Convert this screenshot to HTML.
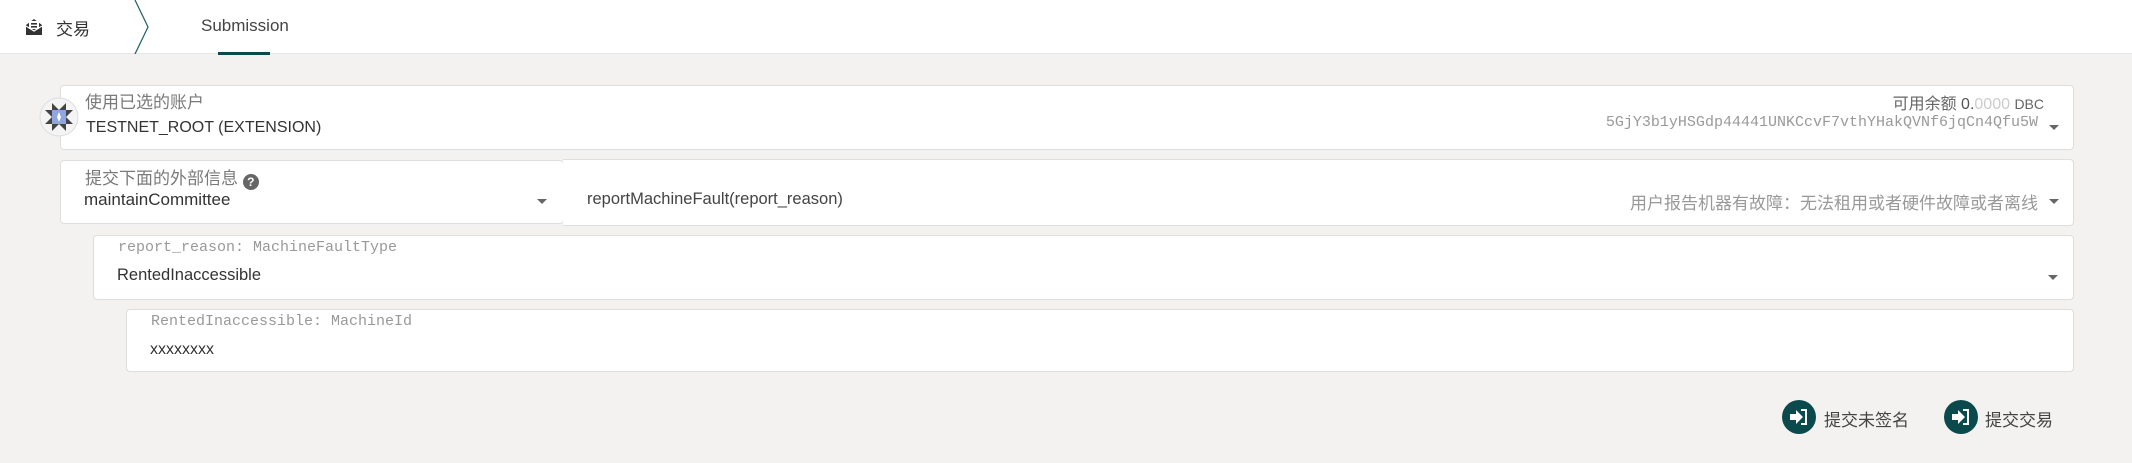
<!DOCTYPE html>
<html><head><meta charset="utf-8"><style>
*{margin:0;padding:0;box-sizing:border-box}
body{width:2132px;height:463px;background:#f3f2f0;font-family:"Liberation Sans","Noto Sans CJK SC",sans-serif;position:relative;overflow:hidden;color:#333}
.a{position:absolute;white-space:nowrap}
.box{position:absolute;background:#fff;border:1px solid #dedede;border-radius:4px}
.lbl{color:#7a7a7a;font-size:17px}
.mono{font-family:"Liberation Mono",monospace;color:#999;font-size:15px}
.val{font-size:17px;color:#333}
.arr{position:absolute;width:0;height:0;border-left:5px solid transparent;border-right:5px solid transparent;border-top:5px solid #666}
.btn{position:absolute;width:34px;height:34px;border-radius:50%;background:#0b4a4c}
</style></head><body>
<div class="a" style="left:0;top:0;width:2132px;height:54px;background:#fff;border-bottom:1px solid #e6e6e6"></div>
<svg class="a" style="left:24px;top:18px" width="20" height="18" viewBox="0 0 20 18"><path d="M2 7 L10 1 L18 7 V17 H2Z" fill="#333"/><rect x="5" y="3" width="10" height="8" fill="#fff"/><rect x="7" y="5" width="6" height="1.6" fill="#333"/><rect x="7" y="8" width="6" height="1.6" fill="#333"/><path d="M2 8 L10 13 L18 8" stroke="#fff" stroke-width="1.2" fill="none"/></svg>
<div class="a" style="left:56px;top:15px;font-size:17px;color:#333">交易</div>
<svg class="a" style="left:130px;top:0" width="24" height="54"><path d="M5 0 L18 27 L5 54" stroke="#1e5d5f" stroke-width="1.2" fill="none"/></svg>
<div class="a" style="left:201px;top:16px;font-size:17px;color:#444">Submission</div>
<div class="a" style="left:218px;top:52px;width:52px;height:3px;background:#0b4a4c"></div>

<div class="box" style="left:60px;top:85px;width:2014px;height:65px"></div>
<svg class="a" style="left:39px;top:97px" width="40" height="40" viewBox="0 0 40 40"><circle cx="20" cy="20" r="19" fill="#f4f4f4" stroke="#ddd"/><rect x="13" y="13" width="14" height="14" fill="#8fa6e0"/><path d="M13 6 L20 13 L13 13Z M27 6 L20 13 L27 13Z M6 13 L13 20 L13 13Z M34 13 L27 20 L27 13Z M6 27 L13 20 L13 27Z M34 27 L27 20 L27 27Z M13 34 L20 27 L13 27Z M27 34 L20 27 L27 27Z" fill="#444"/><path d="M20 15 L22 20 L20 25 L18 20Z" fill="#fff"/></svg>
<div class="a lbl" style="left:85px;top:88px">使用已选的账户</div>
<div class="a val" style="left:86px;top:119px;font-size:16px">TESTNET_ROOT (EXTENSION)</div>
<div class="a" style="right:88px;top:90px;font-size:16px;color:#666">可用余额 <span style="color:#555">0.</span><span style="color:#ccc">0000</span> <span style="font-size:14px">DBC</span></div>
<div class="a mono" style="right:94px;top:114px">5GjY3b1yHSGdp44441UNKCcvF7vthYHakQVNf6jqCn4Qfu5W</div>
<div class="arr" style="left:2049px;top:125px"></div>

<div class="box" style="left:60px;top:160px;width:504px;height:64px"></div>
<div class="box" style="left:563px;top:159px;width:1511px;height:67px;border-left:none;border-radius:0 4px 4px 0"></div>
<div class="a lbl" style="left:85px;top:164px">提交下面的外部信息 <span style="display:inline-block;width:16px;height:16px;border-radius:50%;background:#666;color:#fff;font-size:12px;text-align:center;line-height:16px;font-weight:bold;vertical-align:-2px">?</span></div>
<div class="a val" style="left:84px;top:190px">maintainCommittee</div>
<div class="arr" style="left:537px;top:199px"></div>
<div class="a" style="left:587px;top:190px;font-size:16.5px;color:#444">reportMachineFault(report_reason)</div>
<div class="a" style="right:94px;top:189px;font-size:17px;color:#999">用户报告机器有故障：无法租用或者硬件故障或者离线</div>
<div class="arr" style="left:2049px;top:199px"></div>

<div class="box" style="left:93px;top:235px;width:1981px;height:65px"></div>
<div class="a mono" style="left:118px;top:239px">report_reason: MachineFaultType</div>
<div class="a val" style="left:117px;top:266px;font-size:16.5px">RentedInaccessible</div>
<div class="arr" style="left:2048px;top:275px"></div>

<div class="box" style="left:126px;top:309px;width:1948px;height:63px"></div>
<div class="a mono" style="left:151px;top:313px">RentedInaccessible: MachineId</div>
<div class="a val" style="left:150px;top:341px;font-size:16px">xxxxxxxx</div>

<div class="btn" style="left:1782px;top:400px"></div>
<svg class="a" style="left:1789px;top:408px" width="20" height="18" viewBox="0 0 20 18"><path d="M1 6 H7 V2 L14 9 L7 16 V12 H1Z" fill="#fff"/><path d="M12 2 H17 V16 H12" stroke="#fff" stroke-width="2" fill="none"/></svg>
<div class="a" style="left:1824px;top:406px;font-size:17px;color:#444">提交未签名</div>
<div class="btn" style="left:1944px;top:400px"></div>
<svg class="a" style="left:1951px;top:408px" width="20" height="18" viewBox="0 0 20 18"><path d="M1 6 H7 V2 L14 9 L7 16 V12 H1Z" fill="#fff"/><path d="M12 2 H17 V16 H12" stroke="#fff" stroke-width="2" fill="none"/></svg>
<div class="a" style="left:1985px;top:406px;font-size:17px;color:#444">提交交易</div>
</body></html>
